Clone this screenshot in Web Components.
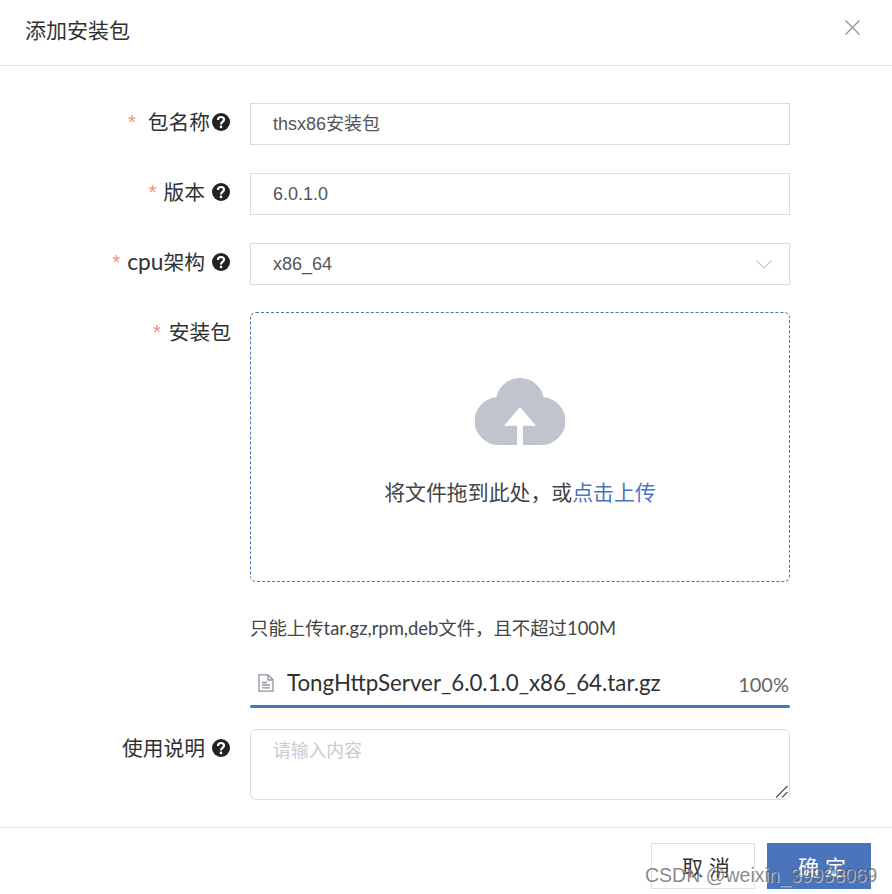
<!DOCTYPE html>
<html lang="zh">
<head>
<meta charset="utf-8">
<title>添加安装包</title>
<style>
  html, body { margin: 0; background: #fff; }
  body { font-family: Lato, "Noto Sans CJK SC", sans-serif; color: #303133; }
</style>
</head>
<body>
<add-package-dialog>
  <form-row label="包名称" req-gap="12" help-gap="2">
    <text-field value="thsx86安装包"></text-field>
  </form-row>
  <form-row label="版本" req-gap="7" help-gap="7">
    <text-field value="6.0.1.0"></text-field>
  </form-row>
  <form-row label="<b>cpu</b>架构" req-gap="7" help-gap="7">
    <text-field value="x86_64" select></text-field>
  </form-row>
  <form-row label="安装包" req-gap="8" no-help>
    <upload-box></upload-box>
    <upload-file name="TongHttpServer_6.0.1.0_x86_64.tar.gz" percent="100%"></upload-file>
  </form-row>
  <form-row label="使用说明" no-req help-gap="7" flush>
    <note-field placeholder="请输入内容"></note-field>
  </form-row>
</add-package-dialog>

<script>
const helpIcon = `<svg width="18" height="18" viewBox="0 0 18 18"><circle cx="9" cy="9" r="9" fill="#222"/><path d="M6 7c0-2 1.300-3 3-3s3 1 3 2.600c0 2.400-3 2.300-3 4.800" fill="none" stroke="#fff" stroke-width="2.200"/><circle cx="9" cy="13.900" r="1.300" fill="#fff"/></svg>`

class AddPackageDialog extends HTMLElement {
  constructor(){
    super()
    this.attachShadow({mode: 'open'}).innerHTML = `
      <style>
        :host{ display: flex; flex-direction: column; width: 892px; height: 894px; overflow: hidden; position: relative; background: #fff; }
        header{ flex: none; display: flex; align-items: center; justify-content: space-between; padding: 0 32px 4px 25px; box-sizing: border-box; border-bottom: 1px solid #e6e6e6; height: 66px; }
        h1{ margin: -3px 0 0; font: 400 21px/28px "Noto Sans CJK SC", sans-serif; color: #303133; }
        header svg{ display: block; margin-top: -6px; }
        main{ flex: none; height: 762px; box-sizing: border-box; padding-top: 37px; border-bottom: 1px solid #e6e6e6; }
        footer{ display: flex; justify-content: flex-end; gap: 12px; padding: 15px 21px 0 0; }
        button{ width: 104px; height: 46px; box-sizing: border-box; font: 400 21px/44px "Noto Sans CJK SC", sans-serif; letter-spacing: 6px; padding: 0 0 0 12px; margin: 0; border: 1px solid #dcdfe6; background: #fff; color: #303133; }
        button.primary{ background: #4a75bc; border-color: #4a75bc; color: #fff; }
        .mark{ position: absolute; left: 645px; top: 862px; font: 400 19.500px/26px "Liberation Sans", sans-serif; color: rgba(90,90,90,.72); text-shadow: 1px 1px 0 rgba(255,255,255,.55); white-space: nowrap; }
      </style>
      <header>
        <h1>添加安装包</h1>
        <svg width="15" height="15" viewBox="0 0 15 15"><path d="M.5.5l14 14M14.500.5l-14 14" stroke="#8f939c" stroke-width="1.300" fill="none"/></svg>
      </header>
      <main><slot></slot></main>
      <footer>
        <button>取消</button>
        <button class="primary">确定</button>
      </footer>
      <div class="mark">CSDN @weixin_39938069</div>
    `
  }
}

class FormRow extends HTMLElement {
  constructor(){
    super()
    const help = this.hasAttribute('no-help') ? '' : `<span class="help" style="margin-left:${this.getAttribute('help-gap')}px">${helpIcon}</span>`
    const req = this.hasAttribute('no-req') ? '' : `<span class="req" style="margin-right:${this.getAttribute('req-gap')}px">*</span>`
    this.attachShadow({mode: 'open'}).innerHTML = `
      <style>
        :host{ display: grid; grid-template-columns: 231px 540px; column-gap: 19px; margin-bottom: 28px; }
        :host([flush]){ margin-bottom: 0; }
        label{ display: flex; align-items: center; justify-content: flex-end; height: 38px; font: 400 20.750px/38px Lato, "Noto Sans CJK SC", sans-serif; color: #303133; white-space: nowrap; }
        b{ font-weight: 400; font-size: 22.700px; }
        .req{ color: #f78989; font: 400 20px/38px "Liberation Sans", sans-serif; }
        .help{ display: flex; margin-right: 1px; }
      </style>
      <label>${req}<span>${this.getAttribute('label')}</span>${help}</label>
      <div><slot></slot></div>
    `
  }
}

class TextField extends HTMLElement {
  constructor(){
    super()
    const arrow = this.hasAttribute('select') ? `<svg width="16" height="9" viewBox="0 0 16 9"><path d="M.5.7L8 8l7.500-7.300" stroke="#c6c9d0" stroke-width="1.200" fill="none"/></svg>` : ''
    this.attachShadow({mode: 'open'}).innerHTML = `
      <style>
        :host{ display: flex; align-items: center; justify-content: space-between; height: 42px; box-sizing: border-box; border: 1px solid #dcdcdc; padding: 0 17px 0 22px; font: 400 18px/40px "Liberation Sans", "Noto Sans CJK SC", sans-serif; color: #555; background: #fff; }
      </style>
      <span>${this.getAttribute('value')}</span>${arrow}
    `
  }
}

class UploadBox extends HTMLElement {
  constructor(){
    super()
    this.attachShadow({mode: 'open'}).innerHTML = `
      <style>
        :host{ display: block; margin-top: -1px; }
        .drop{ height: 270px; box-sizing: border-box; border: 1px dashed #4a75bc; border-radius: 6px; display: flex; flex-direction: column; align-items: center; padding-top: 65px; }
        svg{ display: block; }
        p{ margin: 32px 0 0; font: 400 20.900px/28px "Noto Sans CJK SC", sans-serif; color: #444; }
        em{ font-style: normal; color: #4a75bc; }
        small{ display: block; margin-top: 31px; font: 400 18.400px/30px Lato, "Noto Sans CJK SC", sans-serif; color: #444; }
      </style>
      <div class="drop">
        <svg width="90" height="67" viewBox="0 0 90 67"><path d="M42 67H23.900A23.900 23.900 0 0 1 21.300 19.300A24.200 24.200 0 0 1 68.700 19.300A23.900 23.900 0 0 1 66.100 67H48V47.700H61L45 29 29 47.700H42z" fill="#c0c4cc"/></svg>
        <p>将文件拖到此处，或<em>点击上传</em></p>
      </div>
      <small>只能上传tar.gz,rpm,deb文件，且不超过100M</small>
    `
  }
}

class UploadFile extends HTMLElement {
  constructor(){
    super()
    this.attachShadow({mode: 'open'}).innerHTML = `
      <style>
        :host{ display: block; margin: 24px 0 -7px; }
        .row{ display: flex; align-items: center; height: 32px; padding-left: 8px; }
        svg{ flex: none; margin-right: 13px; }
        .name{ flex: 1; font: 400 22.300px/32px Lato, sans-serif; color: #303133; white-space: nowrap; }
        .pct{ font: 400 20px/32px Lato, sans-serif; color: #666; margin: 1px 1px 0 0; }
        .bar{ height: 3px; margin-top: 6px; background: #4a75bc; border-radius: 2px; }
      </style>
      <div class="row">
        <svg width="16" height="18" viewBox="0 0 16 18" fill="none" stroke="#8f939c" stroke-width="1.300"><path d="M1 .8h9l5 5v11.400H1z"/><path d="M10 1v5h5M4 8.500h5M4 11h8M4 13.800h8"/></svg>
        <span class="name">${this.getAttribute('name')}</span>
        <span class="pct">${this.getAttribute('percent')}</span>
      </div>
      <div class="bar"></div>
    `
  }
}

class NoteField extends HTMLElement {
  constructor(){
    super()
    this.attachShadow({mode: 'open'}).innerHTML = `
      <style>
        :host{ display: block; position: relative; height: 71px; box-sizing: border-box; border: 1px solid #dcdcdc; border-radius: 6px; padding: 5px 22px; font: 400 17.800px/28px "Noto Sans CJK SC", sans-serif; color: #c8cbd2; }
        svg{ position: absolute; right: 1px; bottom: 1px; }
      </style>
      <span>${this.getAttribute('placeholder')}</span>
      <svg width="13" height="13" viewBox="0 0 13 13" stroke="#555" stroke-width="1.200" fill="none"><path d="M1 12.500L12.500 1M7 12.500L12.500 7"/></svg>
    `
  }
}

customElements.define('add-package-dialog', AddPackageDialog)
customElements.define('form-row', FormRow)
customElements.define('text-field', TextField)
customElements.define('upload-box', UploadBox)
customElements.define('upload-file', UploadFile)
customElements.define('note-field', NoteField)
</script>
</body>
</html>
